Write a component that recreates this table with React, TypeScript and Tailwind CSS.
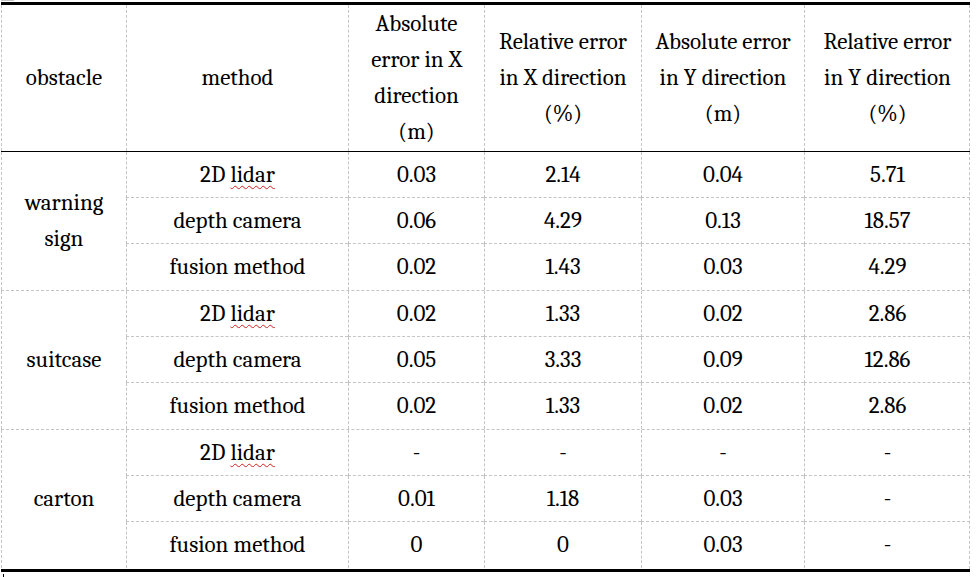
import React from "react";

const cols = "grid grid-cols-[125px_222px_136px_157px_163px_166px]";
const cell =
  "border-l border-dashed border-[#c4c4c4] flex items-center justify-center text-center text-[23px] leading-[36px] text-black font-serif";

type Row = [string, string, string, string, string];

const groups: { name: React.ReactNode; rows: Row[] }[] = [
  {
    name: (
      <>
        warning
        <br />
        sign
      </>
    ),
    rows: [
      ["2D lidar", "0.03", "2.14", "0.04", "5.71"],
      ["depth camera", "0.06", "4.29", "0.13", "18.57"],
      ["fusion method", "0.02", "1.43", "0.03", "4.29"],
    ],
  },
  {
    name: "suitcase",
    rows: [
      ["2D lidar", "0.02", "1.33", "0.02", "2.86"],
      ["depth camera", "0.05", "3.33", "0.09", "12.86"],
      ["fusion method", "0.02", "1.33", "0.02", "2.86"],
    ],
  },
  {
    name: "carton",
    rows: [
      ["2D lidar", "-", "-", "-", "-"],
      ["depth camera", "0.01", "1.18", "0.03", "-"],
      ["fusion method", "0", "0", "0.03", "-"],
    ],
  },
];

function Method({ m }: { m: string }) {
  if (m === "2D lidar") {
    return (
      <span>
        2D{" "}
        <span className="underline decoration-wavy decoration-[#d02020] decoration-1 underline-offset-[3px]">
          lidar
        </span>
      </span>
    );
  }
  return <span>{m}</span>;
}

export default function App() {
  return (
    <div className="w-[976px] h-[577px] bg-white font-serif">
      <div className="pl-px w-[970px]">
        <div className="h-[2px] flex">
          <div className="w-[13px] border-t border-[#c4c4c4]" />
        </div>
        <div className="h-[3px] bg-black" />
        <div className={`${cols} h-[146px] border-r border-dashed border-[#c4c4c4]`}>
          <div className={cell}>obstacle</div>
          <div className={cell}>method</div>
          <div className={cell}>
            <span>
              Absolute
              <br />
              error in X
              <br />
              direction
              <br />
              (m)
            </span>
          </div>
          <div className={cell}>
            <span>
              Relative error
              <br />
              in X direction
              <br />
              (%)
            </span>
          </div>
          <div className={cell}>
            <span>
              Absolute error
              <br />
              in Y direction
              <br />
              (m)
            </span>
          </div>
          <div className={cell}>
            <span>
              Relative error
              <br />
              in Y direction
              <br />
              (%)
            </span>
          </div>
        </div>
        <div className="h-px bg-black" />
        {groups.map((g, gi) => (
          <div
            key={gi}
            className={`${cols} grid-rows-[46px_46px_46px] h-[139px] border-r border-dashed border-[#c4c4c4] ${
              gi < 2 ? "border-b" : ""
            }`}
          >
            <div className={`${cell} row-span-3`}>
              <span>{g.name}</span>
            </div>
            {g.rows.map((r, ri) => (
              <React.Fragment key={ri}>
                {r.map((c, ci) => (
                  <div key={ci} className={`${cell} ${ri < 2 ? "border-b" : ""}`}>
                    {ci === 0 ? <Method m={c} /> : c}
                  </div>
                ))}
              </React.Fragment>
            ))}
          </div>
        ))}
        <div className="h-[3px] bg-black" />
        <div className="pl-[2px] pt-[2px]">
          <div className="w-px h-[3px] bg-black" />
        </div>
      </div>
    </div>
  );
}
